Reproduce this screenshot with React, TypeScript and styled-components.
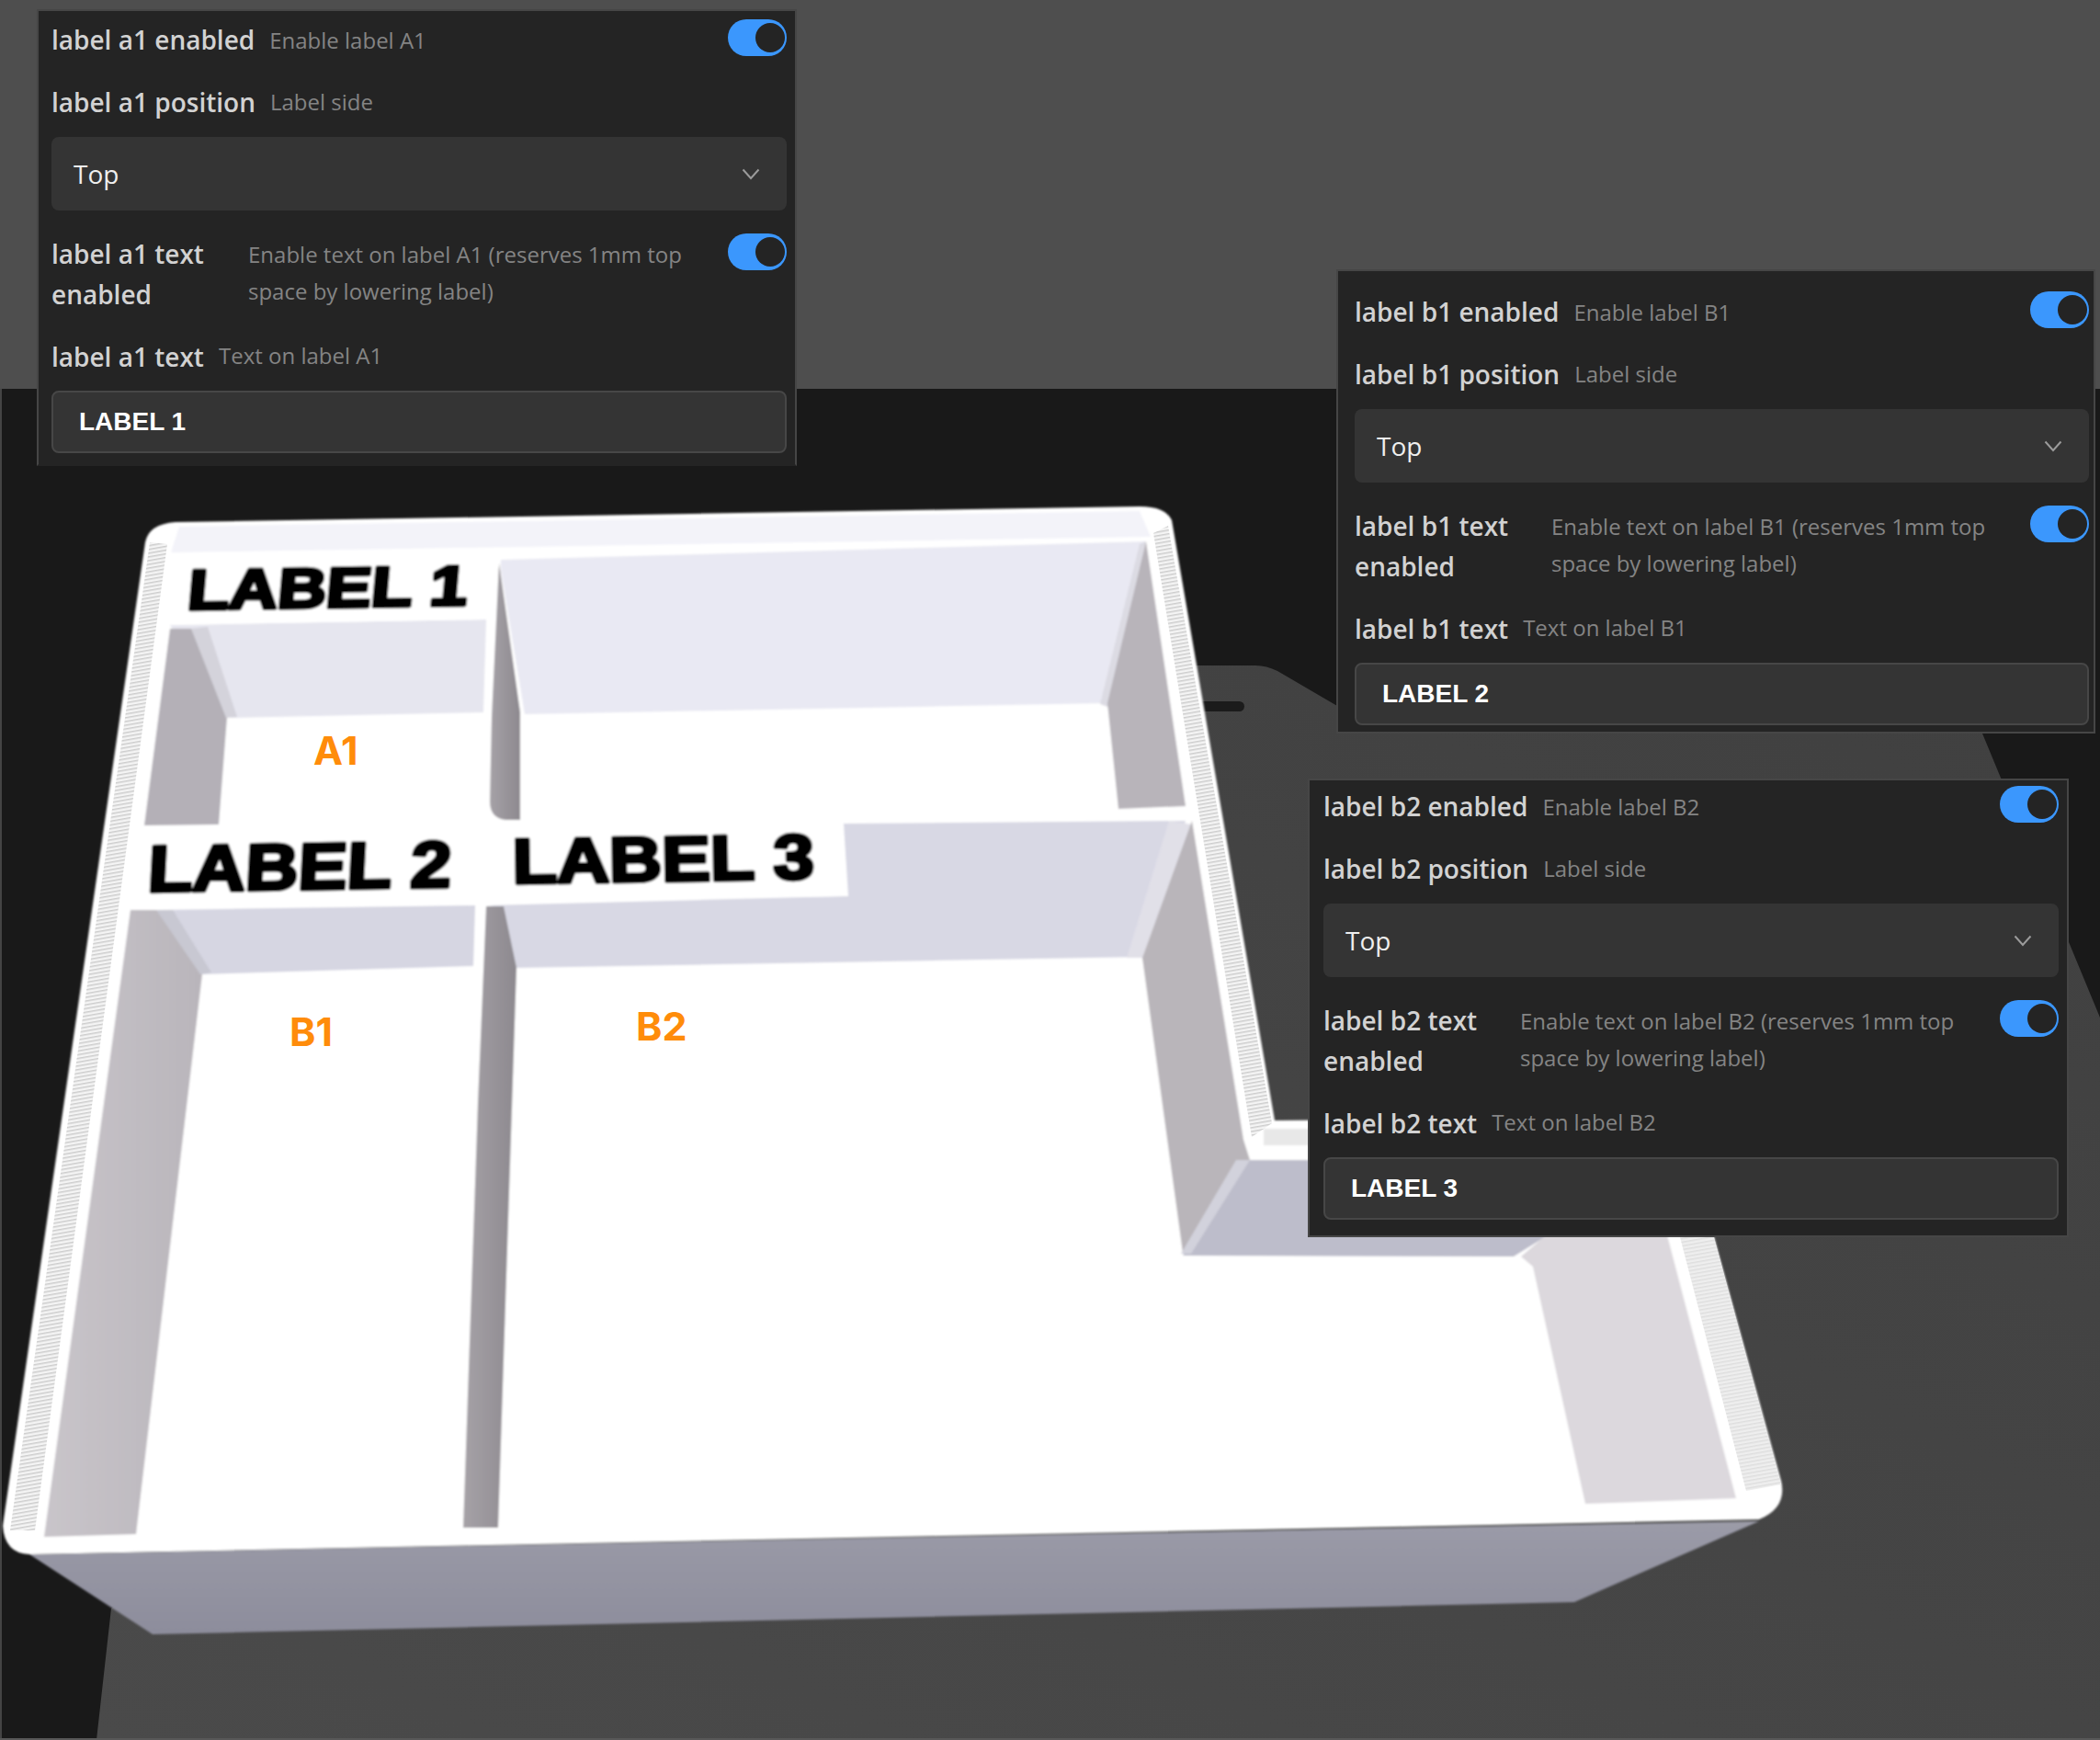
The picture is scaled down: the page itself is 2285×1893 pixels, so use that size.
import React from "react";
import styled, { createGlobalStyle } from "styled-components";

const Global = createGlobalStyle`
  html, body { margin: 0; padding: 0; background: #191919; }
`;

const Stage = styled.div`
  position: relative;
  width: 2285px;
  height: 1893px;
  overflow: hidden;
  font-family: "Open Sans", "Noto Sans", sans-serif;
`;

const Scene = styled.svg`
  display: block;
  width: 2285px;
  height: 1893px;
`;

const SceneLabel = styled.text<{ $size: number }>`
  font-family: "Liberation Sans", sans-serif;
  font-weight: 700;
  font-size: ${(p) => p.$size}px;
  fill: #050505;
  stroke: #050505;
  stroke-width: 4.6px;
  stroke-linejoin: round;
`;

const Marker = styled.span<{ $x: number; $y: number }>`
  position: absolute;
  left: ${(p) => p.$x}px;
  top: ${(p) => p.$y}px;
  font-family: "Inter", "Liberation Sans", sans-serif;
  font-weight: 700;
  font-size: 43px;
  line-height: 44px;
  color: #ff8c0a;
`;

const Panel = styled.section<{
  $left: number;
  $top: number;
  $width: number;
  $pad: string;
  $open?: boolean;
}>`
  position: absolute;
  left: ${(p) => p.$left}px;
  top: ${(p) => p.$top}px;
  width: ${(p) => p.$width}px;
  box-sizing: border-box;
  padding: ${(p) => p.$pad};
  background: #242424;
  border: 2px solid #464646;
  border-bottom-color: ${(p) => (p.$open ? "#242424" : "#464646")};
  display: flex;
  flex-direction: column;
`;

const Row = styled.div<{ $mt?: number; $mb?: number; $h?: number }>`
  display: flex;
  align-items: flex-start;
  min-height: ${(p) => p.$h ?? 40}px;
  margin-top: ${(p) => p.$mt ?? 0}px;
  margin-bottom: ${(p) => p.$mb ?? 0}px;
`;

const Title = styled.span<{ $wrap?: boolean; $shift?: number }>`
  flex: none;
  width: ${(p) => (p.$wrap ? "198px" : "auto")};
  margin-right: 16px;
  padding-top: ${(p) => p.$shift ?? 0}px;
  font-weight: 600;
  font-size: 28px;
  line-height: ${(p) => (p.$wrap ? "44.5px" : "43px")};
  color: #d2d2d2;
`;

const Hint = styled.span<{ $shift?: number }>`
  max-width: 500px;
  padding-top: ${(p) => p.$shift ?? 0}px;
  font-weight: 400;
  font-size: 24px;
  line-height: 40px;
  color: #848484;
`;

const Track = styled.span`
  position: relative;
  flex: none;
  margin-left: auto;
  width: 64px;
  height: 40px;
  border-radius: 20px;
  background: #3b97fd;
`;

const Knob = styled.span`
  position: absolute;
  right: 2px;
  top: 4px;
  width: 32px;
  height: 32px;
  border-radius: 50%;
  background: #242424;
`;

const Select = styled.div`
  display: flex;
  align-items: center;
  justify-content: space-between;
  height: 80px;
  box-sizing: border-box;
  padding: 0 29px 0 24px;
  border-radius: 8px;
  background: #343434;
  font-weight: 400;
  font-size: 28px;
  color: #efefef;
`;

const Chevron = styled.svg`
  display: block;
  width: 20px;
  height: 13px;
  fill: none;
  stroke: #9b9b9b;
  stroke-width: 2;
`;

const TextBox = styled.div`
  display: flex;
  align-items: center;
  height: 68px;
  margin-top: 14.5px;
  box-sizing: border-box;
  padding: 0 28px;
  border: 2px solid #474747;
  border-radius: 8px;
  background: #343434;
  font-family: "Liberation Sans", Arial, sans-serif;
  font-weight: 700;
  font-size: 28px;
  color: #fff;
`;

type Cfg = {
  id: string;
  up: string;
  left: number;
  top: number;
  width: number;
  pad: string;
  value: string;
  open?: boolean;
};

const panels: Cfg[] = [
  { id: "a1", up: "A1", left: 40, top: 10, width: 827, pad: "9px 9px 12px 14px", value: "LABEL 1", open: true },
  { id: "b1", up: "B1", left: 1454, top: 293, width: 826, pad: "22px 5px 7px 18px", value: "LABEL 2" },
  { id: "b2", up: "B2", left: 1423, top: 847, width: 828, pad: "6px 9px 17px 15px", value: "LABEL 3" },
];

const Settings: React.FC<{ c: Cfg }> = ({ c }) => (
  <Panel $left={c.left} $top={c.top} $width={c.width} $pad={c.pad} $open={c.open}>
    <Row>
      <Title $shift={1}>label {c.id} enabled</Title>
      <Hint $shift={3}>Enable label {c.up}</Hint>
      <Track><Knob /></Track>
    </Row>
    <Row $mt={25} $mb={16} $h={43}>
      <Title>label {c.id} position</Title>
      <Hint $shift={1}>Label side</Hint>
    </Row>
    <Select>
      <span>Top</span>
      <Chevron viewBox="0 0 20 13"><path d="M1.5 1.5 10 11l8.5-9.500" /></Chevron>
    </Select>
    <Row $mt={24.5}>
      <Title $wrap>label {c.id} text enabled</Title>
      <Hint $shift={3}>Enable text on label {c.up} (reserves 1mm top space by lowering label)</Hint>
      <Track><Knob /></Track>
    </Row>
    <Row $mt={24.5} $h={43}>
      <Title>label {c.id} text</Title>
      <Hint>Text on label {c.up}</Hint>
    </Row>
    <TextBox>{c.value}</TextBox>
  </Panel>
);

const Box3D: React.FC = () => (
  <Scene viewBox="0 0 2285 1893">
    <defs>
      <filter id="soft" x="-2%" y="-2%" width="104%" height="104%">
        <feGaussianBlur stdDeviation="0.9" />
      </filter>
      <linearGradient id="side" x1="0" y1="0" x2="0" y2="1">
        <stop offset="0" stopColor="#9b9ba8" />
        <stop offset="1" stopColor="#8d8d9c" />
      </linearGradient>
      <linearGradient id="wallL" x1="0" y1="0" x2="1" y2="0">
        <stop offset="0" stopColor="#c9c5ca" />
        <stop offset="1" stopColor="#b9b5bb" />
      </linearGradient>
      <linearGradient id="div" x1="0" y1="0" x2="1" y2="0">
        <stop offset="0" stopColor="#a6a2a7" />
        <stop offset="1" stopColor="#8d898f" />
      </linearGradient>
      <linearGradient id="plate" x1="1" y1="0" x2="0" y2="1">
        <stop offset="0" stopColor="#404040" />
        <stop offset="1" stopColor="#4a4a4a" />
      </linearGradient>
      <pattern id="hatch" width="6" height="4" patternUnits="userSpaceOnUse" patternTransform="rotate(-10)">
        <rect width="6" height="4" fill="#f4f4f4" />
        <rect width="6" height="1.500" fill="#cdcdcd" />
      </pattern>
      <pattern id="hatchLight" width="6" height="4" patternUnits="userSpaceOnUse" patternTransform="rotate(-10)">
        <rect width="6" height="4" fill="#eeeeee" />
        <rect width="6" height="1.500" fill="#dedede" />
      </pattern>
    </defs>

    <rect x="0" y="0" width="2285" height="423" fill="#4e4e4e" />
    <rect x="0" y="423" width="2285" height="1470" fill="#191919" />
    <rect x="0" y="423" width="2" height="1470" fill="#444" />
    <path d="M1296 724 L1366 724 Q1378 724 1390 730 L1455 768 L2157 798 L2285 1107 L2285 1893 L105 1893 L121 1750 Z" fill="url(#plate)" />
    <rect x="1300" y="763" width="54" height="11" rx="5.500" fill="#1b1b1b" />
    <rect x="0" y="1891" width="2285" height="2" fill="#585858" />

    <g filter="url(#soft)">
      <polygon points="32,1691 166,1778 1713,1743 1914,1655" fill="url(#side)" />

      <path d="M191 568 L1240 551 Q1268 551 1275 566 L1387 1219 L1829 1215 L1938 1611 Q1945 1640 1914 1653 L32 1691 Q5 1690 3 1660 L158 590 Q162 570 191 568 Z" fill="#ffffff" />
      <polygon points="195,573 1240,556 1252,584 186,601" fill="#f3f3f9" />
      <polygon points="1375,1228 1430,1228 1430,1246 1375,1246" fill="#e8e8e8" />

      {/* big back compartment */}
      <polygon points="545,609 1247,589 1203,765 571,777 545,620" fill="#e9e9f3" />
      <polygon points="1240,592 1247,589 1208,770 1197,766" fill="#dcdbe3" />
      <polygon points="1247,589 1290,877 1217,880 1205,765" fill="#b8b4ba" />
      <path d="M543 612 L566 775 L566 892 L550 892 Q533 890 533 872 L535 780 Z" fill="url(#div)" />

      {/* A1 compartment */}
      <polygon points="185,680 529,674 526,775 252,781" fill="#e6e6ef" />
      <polygon points="185,684 210,684 247,780 238,897 157,898" fill="#b4b0b7" />
      <polygon points="208,684 226,682 258,780 246,781" fill="#d4d3db" />

      {/* lower compartments */}
      <polygon points="529,985 918,975 918,896 1290,893 1243,1041 561,1053 548,987" fill="#d8d8e4" />
      <polygon points="1272,893 1297,897 1243,1042 1226,1042" fill="#e1e0e8" />
      <polygon points="172,990 517,985 515,1051 220,1060" fill="#d6d6e2" />
      <polygon points="142,990 172,990 220,1060 148,1669 48,1672" fill="url(#wallL)" />
      <polygon points="170,990 188,990 230,1058 218,1060" fill="#c8c8d2" />
      <polygon points="1243,1042 1297,893 1353,1240 1360,1262 1287,1363" fill="#b9b5ba" />
      <polygon points="1357,1262 1700,1262 1684,1344 1647,1367 1287,1366" fill="#bdbdcb" />
      <polygon points="1345,1262 1360,1262 1296,1364 1285,1364" fill="#d2d2dc" />
      <polygon points="1655,1367 1790,1252 1889,1630 1725,1636 1668,1378" fill="#dcd8dd" />
      <polygon points="529,986 548,986 562,1053 542,1662 504,1662 520,1200" fill="url(#div)" />

      {/* label strips */}
      <polygon points="191,612 545,607 529,674 185,680" fill="#ffffff" />
      <polygon points="156,900 529,896 517,982 142,988" fill="#ffffff" />
      <polygon points="529,897 918,896 923,975 529,981" fill="#ffffff" />

      <SceneLabel $size={61} transform="translate(203 663) rotate(-0.9) skewX(-6)" textLength="304" lengthAdjust="spacingAndGlyphs">LABEL 1</SceneLabel>
      <SceneLabel $size={71} transform="translate(160 970) rotate(-0.9) skewX(-4)" textLength="330" lengthAdjust="spacingAndGlyphs">LABEL 2</SceneLabel>
      <SceneLabel $size={69} transform="translate(558 961) rotate(-0.9) skewX(0)" textLength="328" lengthAdjust="spacingAndGlyphs">LABEL 3</SceneLabel>
    </g>

    {/* printed rim texture */}
    <polygon points="163,590 182,592 38,1665 11,1665" fill="url(#hatch)" />
    <polygon points="1255,580 1271,572 1384,1222 1362,1237" fill="url(#hatch)" />
    <polygon points="1828,1346 1865,1346 1938,1615 1900,1622" fill="url(#hatchLight)" />
  </Scene>
);

export default function App() {
  return (
    <Stage>
      <Global />
      <Box3D />
      <Marker $x={341} $y={794}>A1</Marker>
      <Marker $x={315} $y={1100}>B1</Marker>
      <Marker $x={692} $y={1094}>B2</Marker>
      {panels.map((c) => (
        <Settings key={c.id} c={c} />
      ))}
    </Stage>
  );
}
